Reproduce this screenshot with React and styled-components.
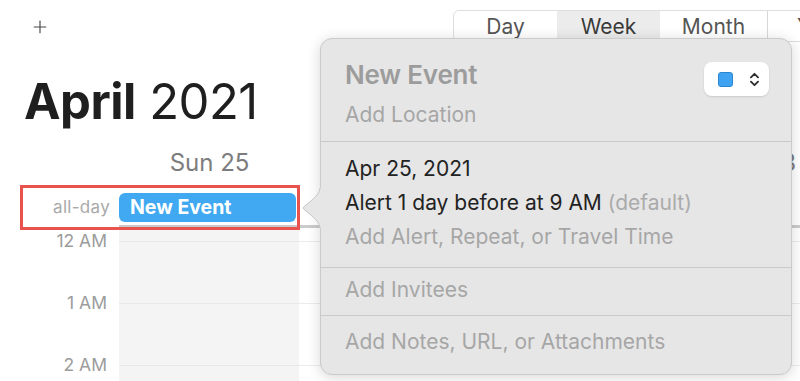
import React from 'react';
import styled, { createGlobalStyle } from 'styled-components';
import { Plus, ChevronsUpDown } from 'lucide-react';

const GlobalStyle = createGlobalStyle`
  html, body {
    margin: 0;
    padding: 0;
    background: #fff;
  }
  body {
    font-family: "Inter", "Noto Sans", sans-serif;
    -webkit-font-smoothing: antialiased;
  }
`;

const days = ['Sun 25', 'Mon 26', 'Tue 27', 'Wed 28'];
const hours = ['12 AM', '1 AM', '2 AM'];

const App = () => {
  return (
    <Window>
      <GlobalStyle />
      <Toolbar>
        <AddButton>
          <Plus size={20} strokeWidth={1.4} />
        </AddButton>
        <Segmented>
          <Segment>Day</Segment>
          <Segment selected>Week</Segment>
          <Segment divided>Month</Segment>
          <Segment>Year</Segment>
        </Segmented>
      </Toolbar>

      <Title>
        <strong>April</strong> 2021
      </Title>

      <DayHeader>
        <span />
        {days.map((d) => (
          <DayName key={d}>{d}</DayName>
        ))}
      </DayHeader>

      <AllDayRow>
        <GutterLabel>all-day</GutterLabel>
        <AllDayCell>
          <EventPill>New Event</EventPill>
        </AllDayCell>
        <AllDayCell />
        <AllDayCell />
        <AllDayCell />
      </AllDayRow>

      <HourArea>
        <TimeGutter>
          {hours.map((h) => (
            <TimeLabel key={h}>{h}</TimeLabel>
          ))}
        </TimeGutter>
        {days.map((d, i) => (
          <DayColumn key={d} weekend={i === 0}>
            {hours.map((h) => (
              <HourSlot key={h} weekend={i === 0} />
            ))}
          </DayColumn>
        ))}
      </HourArea>

      <Highlight />

      <Popover>
        <Tail width="19" height="40" viewBox="0 0 19 40">
          <path
            d="M19 0 L18 0 C18 9 2 17 1 20 C2 23 18 31 18 40 L19 40 Z"
            fill="#e6e6e6"
          />
          <path
            d="M18 0 C18 9 2 17 1 20 C2 23 18 31 18 40"
            fill="none"
            stroke="#c6c6c6"
            strokeWidth="1"
          />
        </Tail>
        <Section top>
          <HeaderRow>
            <EventTitle>New Event</EventTitle>
            <ColorButton>
              <Swatch />
              <ChevronsUpDown size={17} strokeWidth={2.6} color="#2e2e2e" />
            </ColorButton>
          </HeaderRow>
          <Location>Add Location</Location>
        </Section>
        <Section pt={10} pb={13}>
          <Line>Apr 25, 2021</Line>
          <Line>
            Alert 1 day before at 9 AM <Muted>(default)</Muted>
          </Line>
          <Line faded>Add Alert, Repeat, or Travel Time</Line>
        </Section>
        <Section pt={5} pb={8}>
          <Line faded>Add Invitees</Line>
        </Section>
        <Section pt={9} pb={15}>
          <Line faded>Add Notes, URL, or Attachments</Line>
        </Section>
      </Popover>
    </Window>
  );
};

const Window = styled.div`
  position: relative;
  width: 800px;
  height: 381px;
  overflow: hidden;
  background: #fff;
`;

const Toolbar = styled.div`
  height: 50px;
  display: flex;
  align-items: flex-start;
`;

const AddButton = styled.div`
  width: 20px;
  height: 20px;
  margin: 17px 0 0 30px;
  color: #4a4a4a;
  display: flex;
`;

const Segmented = styled.div`
  margin: 10px 0 0 403px;
  display: flex;
  height: 32px;
  border: 1px solid #dedede;
  border-radius: 6px;
  box-sizing: border-box;
  white-space: nowrap;
`;

const Segment = styled.div`
  width: ${(p) => (p.divided ? '107px' : '103px')};
  flex-shrink: 0;
  text-align: center;
  font-size: 21px;
  line-height: 32px;
  color: ${(p) => (p.selected ? '#3a3a3a' : '#555')};
  background: ${(p) => (p.selected ? '#ececec' : 'transparent')};
  border-right: ${(p) => (p.divided ? '1px solid #d8d8d8' : 'none')};
`;

const Title = styled.h1`
  margin: 22px 0 0 24px;
  height: 60px;
  font-size: 49px;
  line-height: 60px;
  font-weight: 400;
  color: #1f1f1f;
  letter-spacing: -0.5px;

  strong {
    font-weight: 700;
  }
`;

const DayHeader = styled.div`
  display: grid;
  grid-template-columns: 119px repeat(4, 181px);
  height: 56px;
  box-sizing: border-box;
  padding-top: 6px;
  align-items: center;
`;

const DayName = styled.div`
  text-align: center;
  font-size: 24px;
  line-height: 28px;
  color: #7d7d7d;
  white-space: nowrap;
`;

const AllDayRow = styled.div`
  display: grid;
  grid-template-columns: 119px repeat(4, 181px);
  height: 40px;
`;

const GutterLabel = styled.div`
  text-align: right;
  padding-right: 9px;
  font-size: 17px;
  letter-spacing: 0.3px;
  line-height: 38px;
  color: #a9a9a9;
`;

const AllDayCell = styled.div`
  padding: 5px 4px 0 0;
  border-bottom: 3px solid #cbcbcb;
`;

const EventPill = styled.div`
  height: 29px;
  border-radius: 6px;
  background: #40a9f1;
  color: #fff;
  font-weight: 700;
  font-size: 19.5px;
  line-height: 28px;
  padding-left: 11px;
`;

const HourArea = styled.div`
  display: grid;
  grid-template-columns: 119px repeat(4, 181px);
  height: 160px;
`;

const TimeGutter = styled.div`
  display: flex;
  flex-direction: column;
  padding-top: 4px;
`;

const TimeLabel = styled.div`
  height: 62px;
  line-height: 18px;
  text-align: right;
  padding-right: 12px;
  font-size: 17.5px;
  color: #9c9c9c;
`;

const DayColumn = styled.div`
  display: flex;
  flex-direction: column;
  padding-top: 13px;
  background: ${(p) => (p.weekend ? '#f4f4f4' : '#fff')};
  border-right: 1px solid #dcdcdc;
  margin-left: ${(p) => (p.weekend ? '0' : '-1px')};
`;

const HourSlot = styled.div`
  height: 61px;
  flex-shrink: 0;
  border-top: 1px solid ${(p) => (p.weekend ? '#e8e8e8' : '#ececec')};
`;

const Highlight = styled.div`
  position: absolute;
  left: 20px;
  top: 185px;
  width: 280px;
  height: 45px;
  box-sizing: border-box;
  border: 3px solid #e8534d;
  pointer-events: none;
`;

const Popover = styled.div`
  position: absolute;
  left: 320px;
  top: 38px;
  width: 472px;
  height: 337px;
  box-sizing: border-box;
  background: #e6e6e6;
  border: 1px solid #cbcbcb;
  border-radius: 12px;
  box-shadow: 0 2px 14px rgba(0, 0, 0, 0.16);
  display: flex;
  flex-direction: column;
`;

const Tail = styled.svg`
  position: absolute;
  left: -19px;
  top: 149px;
`;

const Section = styled.div`
  padding: ${(p) =>
    p.top ? '21px 22px 14px 24px' : `${p.pt}px 22px ${p.pb}px 24px`};
  border-top: ${(p) => (p.top ? 'none' : '1px solid #cacaca')};
`;

const HeaderRow = styled.div`
  display: flex;
  justify-content: space-between;
  align-items: flex-start;
  height: 30px;
`;

const EventTitle = styled.div`
  font-size: 26px;
  line-height: 30px;
  font-weight: 600;
  color: #9c9c9c;
  letter-spacing: -0.2px;
`;

const ColorButton = styled.div`
  margin-top: 2px;
  width: 65px;
  height: 34px;
  box-sizing: border-box;
  background: #fff;
  border-radius: 8px;
  box-shadow: 0 1px 2px rgba(0, 0, 0, 0.12);
  display: flex;
  align-items: center;
  gap: 13px;
  padding-left: 14px;
`;

const Swatch = styled.div`
  width: 15px;
  height: 15px;
  box-sizing: border-box;
  border-radius: 3px;
  background: #3fa3f1;
  border: 1px solid #2a86d0;
`;

const Location = styled.div`
  margin-top: 13px;
  font-size: 21px;
  line-height: 24px;
  color: #a6a6a6;
`;

const Line = styled.div`
  font-size: 21px;
  line-height: 34px;
  color: ${(p) => (p.faded ? '#a6a6a6' : '#222')};
  white-space: nowrap;
`;

const Muted = styled.span`
  color: #ababab;
`;

export default App;
